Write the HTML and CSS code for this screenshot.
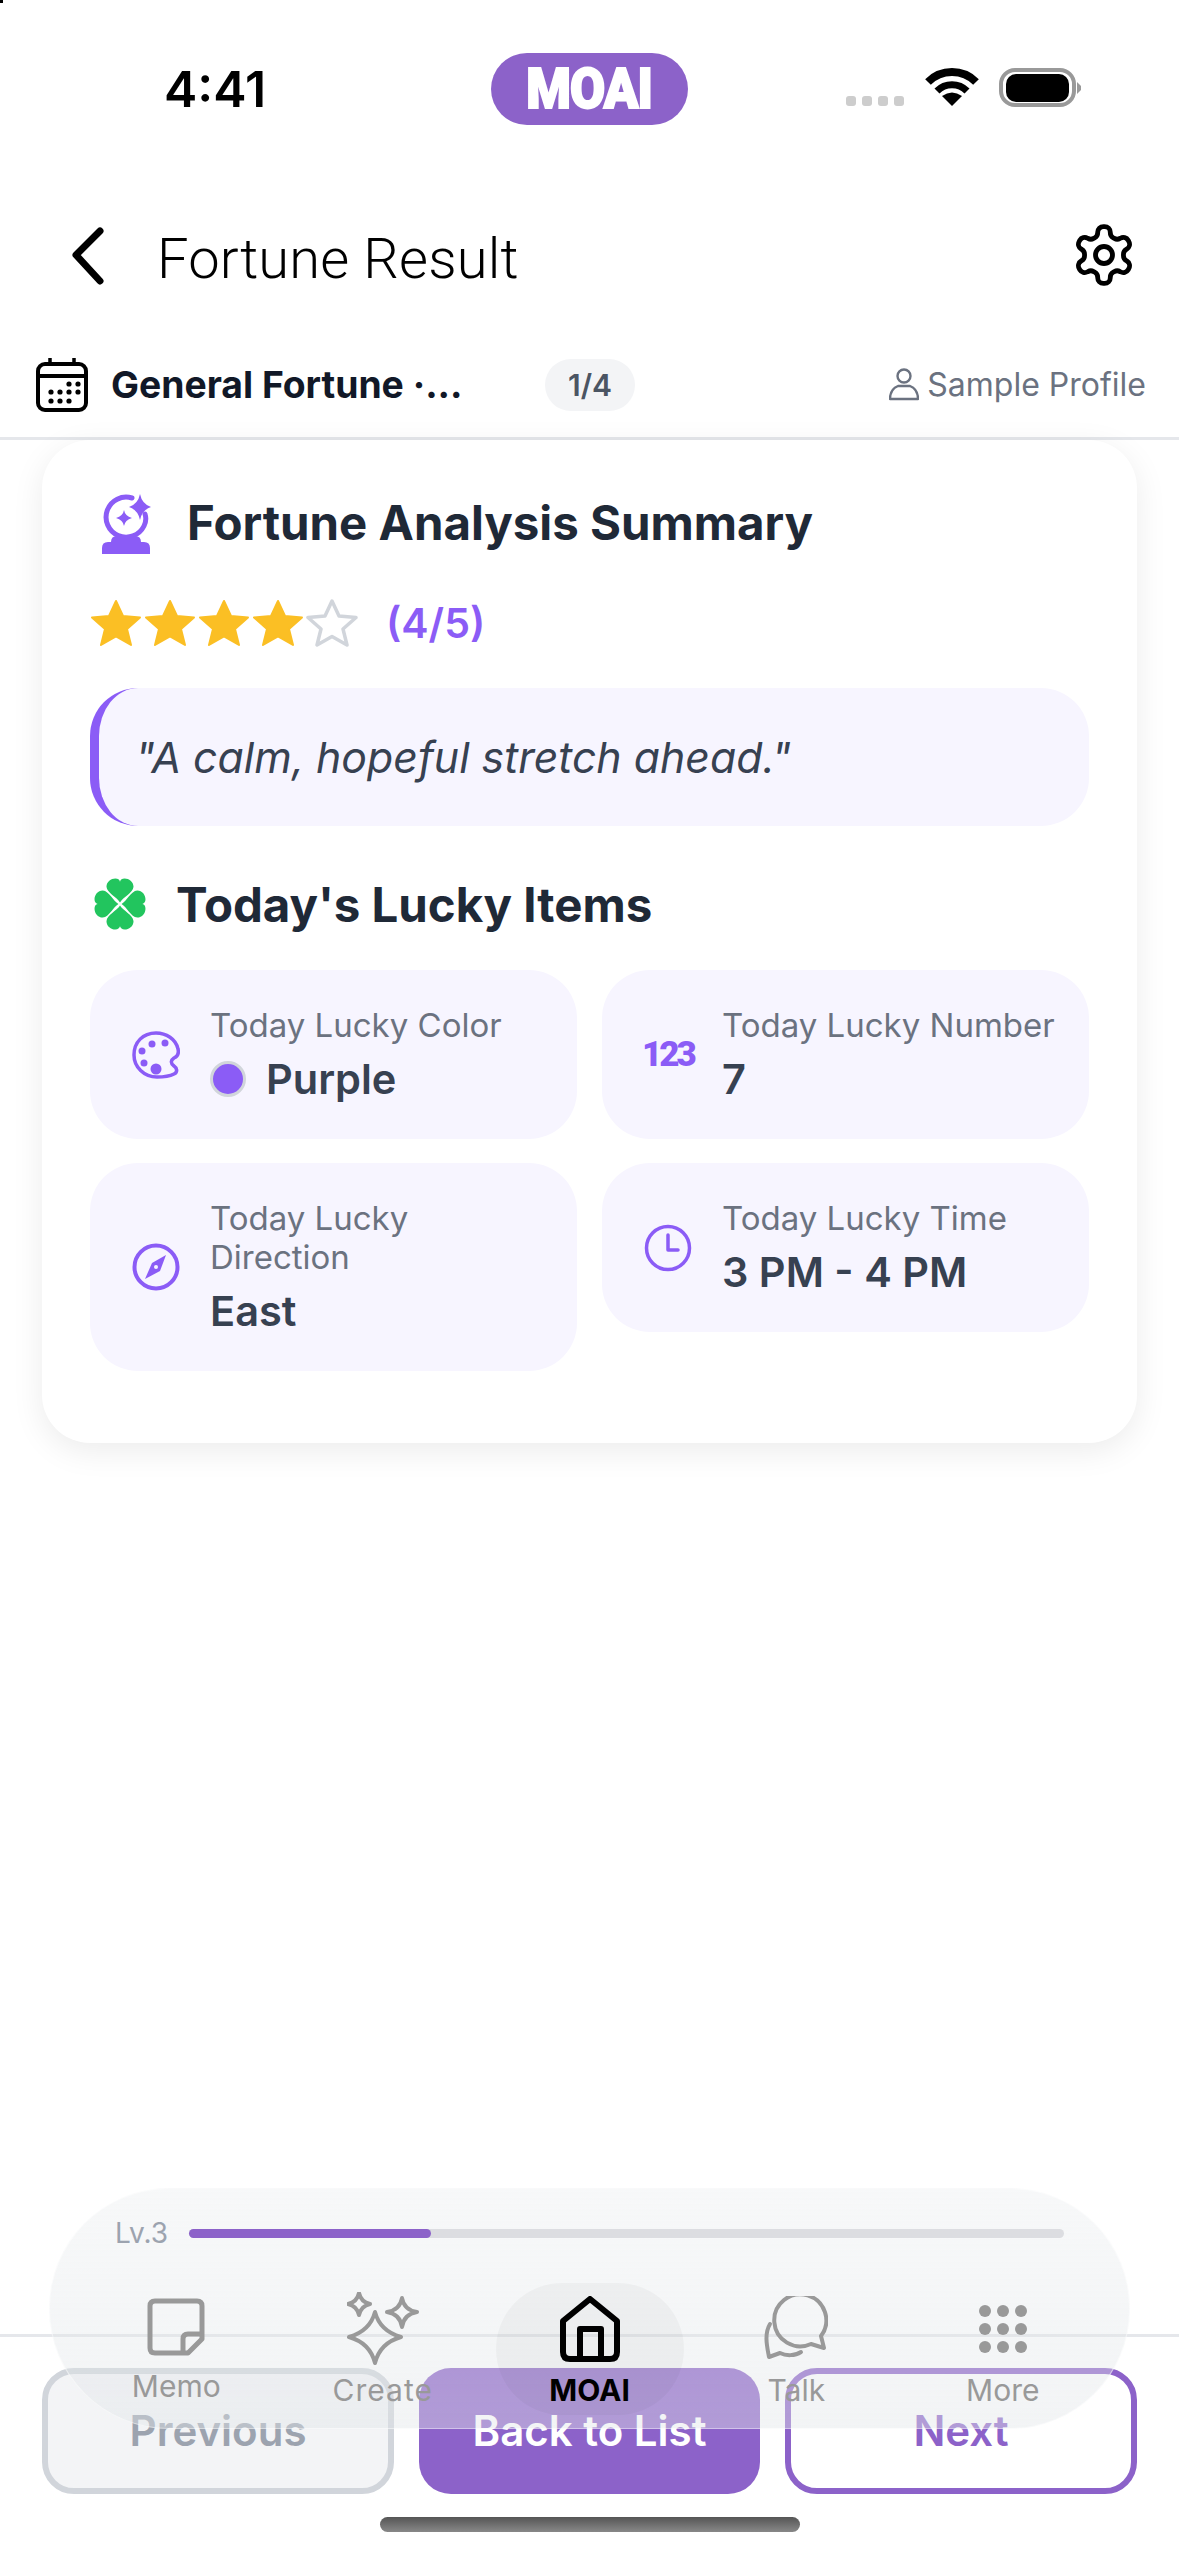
FILE: index.html
```html
<!DOCTYPE html>
<html lang="en">
<head>
    <meta charset="UTF-8">
    <meta name="viewport" content="width=device-width, initial-scale=1.0">
    <title>Fortune Result</title>
    <link rel="stylesheet" href="styles.css">
</head>
<body>
    <div class="screen">
        <span class="corner-mark"></span>

        <div class="status-bar">
            <span class="status-time">4:41</span>
            <span class="status-logo"><span class="status-logo-text">MOAI</span></span>
            <svg class="status-icons" width="236" height="42" viewBox="0 0 236 42">
                <g fill="#cdcdcd">
                    <rect x="0" y="28" width="10" height="10" rx="3"/>
                    <rect x="16" y="28" width="10" height="10" rx="3"/>
                    <rect x="32" y="28" width="10" height="10" rx="3"/>
                    <rect x="48" y="28" width="10" height="10" rx="3"/>
                </g>
                <g fill="none" stroke="#000">
                    <path d="M82 14 A34 34 0 0 1 130 14" stroke-width="8"/>
                    <path d="M91 23 A21 21 0 0 1 121 23" stroke-width="7"/>
                </g>
                <path d="M106 38 L96 28 Q106 21 116 28 Z" fill="#000"/>
                <rect x="155" y="2" width="73" height="35" rx="14" fill="none" stroke="#999" stroke-width="4"/>
                <rect x="160" y="6" width="63" height="28" rx="10" fill="#000"/>
                <path d="M231 14 L235 18 V22 L231 26 Z" fill="#999"/>
            </svg>
        </div>

        <div class="header">
            <svg class="back-icon" width="36" height="60" viewBox="0 0 36 60">
                <polyline points="31,6 7,30 31,56" fill="none" stroke="#000" stroke-width="7" stroke-linecap="round" stroke-linejoin="round"/>
            </svg>
            <h1 class="page-title">Fortune Result</h1>
            <svg class="gear-icon" width="68" height="68" viewBox="0 0 24 24" fill="none" stroke="#000" stroke-width="1.7" stroke-linecap="round" stroke-linejoin="round">
                <path d="M12.22 2h-.44a2 2 0 0 0-2 2v.18a2 2 0 0 1-1 1.73l-.43.25a2 2 0 0 1-2 0l-.15-.08a2 2 0 0 0-2.73.73l-.22.38a2 2 0 0 0 .73 2.73l.15.1a2 2 0 0 1 1 1.72v.51a2 2 0 0 1-1 1.74l-.15.09a2 2 0 0 0-.73 2.73l.22.38a2 2 0 0 0 2.73.73l.15-.08a2 2 0 0 1 2 0l.43.25a2 2 0 0 1 1 1.73V20a2 2 0 0 0 2 2h.44a2 2 0 0 0 2-2v-.18a2 2 0 0 1 1-1.73l.43-.25a2 2 0 0 1 2 0l.15.08a2 2 0 0 0 2.73-.73l.22-.39a2 2 0 0 0-.73-2.73l-.15-.08a2 2 0 0 1-1-1.74v-.5a2 2 0 0 1 1-1.74l.15-.09a2 2 0 0 0 .73-2.73l-.22-.38a2 2 0 0 0-2.73-.73l-.15.08a2 2 0 0 1-2 0l-.43-.25a2 2 0 0 1-1-1.73V4a2 2 0 0 0-2-2z"/>
                <circle cx="12" cy="12" r="3"/>
            </svg>
        </div>

        <div class="tab-row">
            <svg class="calendar-icon" width="52" height="54" viewBox="0 0 52 54">
                <rect x="2" y="6" width="48" height="46" rx="7" fill="none" stroke="#000" stroke-width="4"/>
                <path d="M2 18 H50" stroke="#000" stroke-width="4"/>
                <path d="M14 0 V6 M38 0 V6" stroke="#000" stroke-width="3.5"/>
                <g fill="#000">
                    <circle cx="33" cy="26" r="2.6"/><circle cx="42" cy="26" r="2.6"/>
                    <circle cx="15" cy="34" r="2.6"/><circle cx="24" cy="34" r="2.6"/><circle cx="33" cy="34" r="2.6"/><circle cx="42" cy="34" r="2.6"/>
                    <circle cx="15" cy="43" r="2.6"/><circle cx="24" cy="43" r="2.6"/><circle cx="33" cy="43" r="2.6"/>
                </g>
            </svg>
            <span class="tab-name">General Fortune ·...</span>
            <span class="tab-count">1/4</span>
            <div class="tab-profile">
                <svg width="30" height="33" viewBox="0 0 30 33" fill="none" stroke="#6b7280" stroke-width="2.4">
                    <circle cx="15" cy="8" r="6.5"/>
                    <path d="M9 18 H21 C26 20 29 25 29 31 H1 C1 25 4 20 9 18 Z" stroke-linejoin="round"/>
                </svg>
                <span>Sample Profile</span>
            </div>
        </div>

        <div class="content">
            <div class="card">
                <div class="card-title-row">
                    <svg class="ball-icon" width="49" height="60" viewBox="0 0 49 60">
                        <path d="M30 4 A20 20 0 1 0 42 32 Q45 26 43 20" fill="none" stroke="#8b5cf6" stroke-width="5" stroke-linecap="round"/>
                        <path d="M38 0 Q40 10 49 13 Q40 16 38 26 Q36 16 27 13 Q36 10 38 0 Z" fill="#8b5cf6"/>
                        <path d="M22 16 Q23 22 30 24 Q23 26 22 32 Q21 26 14 24 Q21 22 22 16 Z" fill="#8b5cf6"/>
                        <path d="M9 48 Q9 42 15 42 H33 Q39 42 39 48 H42 Q48 48 48 54 V60 H0 V54 Q0 48 6 48 Z" fill="#8b5cf6"/>
                    </svg>
                    <h2 class="card-title card-title-main">Fortune Analysis Summary</h2>
                </div>

                <div class="rating-row">
                    <svg class="stars" width="272" height="48" viewBox="0 0 272 48">
                        <defs>
                            <path id="star" d="M26 2 L33 17 L50 18.5 L37 30 L41 46 L26 37.5 L11 46 L15 30 L2 18.5 L19 17 Z"/>
                        </defs>
                        <g fill="#fbbf24" stroke="#fbbf24" stroke-width="2" stroke-linejoin="round">
                            <use href="#star"/>
                            <use href="#star" x="54"/>
                            <use href="#star" x="108"/>
                            <use href="#star" x="162"/>
                        </g>
                        <use href="#star" x="216" fill="none" stroke="#d1d5db" stroke-width="3.5" stroke-linejoin="round"/>
                    </svg>
                    <span class="rating-text">(4/5)</span>
                </div>

                <div class="quote">"A calm, hopeful stretch ahead."</div>

                <div class="lucky-title-row">
                    <svg width="52" height="52" viewBox="0 0 100 100" fill="#22c55e">
                        <path id="leaf" d="M50 47 C44 37 25 29 24 17 C24 7 33 1 41 1 C46 1 49 3 50 7 C51 3 54 1 59 1 C67 1 76 7 76 17 C75 29 56 37 50 47 Z"/>
                        <use href="#leaf" transform="rotate(90 50 50)"/>
                        <use href="#leaf" transform="rotate(180 50 50)"/>
                        <use href="#leaf" transform="rotate(270 50 50)"/>
                    </svg>
                    <h2 class="card-title">Today's Lucky Items</h2>
                </div>

                <div class="lucky-grid">
                    <div class="lucky-item">
                        <svg class="lucky-icon" width="48" height="50" viewBox="0 0 48 50">
                            <path d="M24 3 C11 3 2 12 2 25 C2 37 12 47 25 47 C33 47 38 46 42 44 C46 42 45 38 42 36 C38 33 39 30 42 28 C46 26 47 23 46 19 C44 9 34 3 24 3 Z" fill="none" stroke="#8b5cf6" stroke-width="3.5"/>
                            <g fill="#8b5cf6">
                                <circle cx="20" cy="14" r="3.5"/><circle cx="33" cy="13" r="3.5"/>
                                <circle cx="10" cy="21" r="3.5"/><circle cx="12" cy="33" r="3.5"/>
                                <circle cx="24" cy="39" r="5.5"/>
                            </g>
                        </svg>
                        <div class="lucky-text">
                            <div class="lucky-label">Today Lucky Color</div>
                            <div class="lucky-value lucky-value-color"><span class="color-dot"></span>Purple</div>
                        </div>
                    </div>
                    <div class="lucky-item">
                        <span class="lucky-icon number-icon">123</span>
                        <div class="lucky-text">
                            <div class="lucky-label">Today Lucky Number</div>
                            <div class="lucky-value">7</div>
                        </div>
                    </div>
                    <div class="lucky-item">
                        <svg class="lucky-icon" width="48" height="50" viewBox="0 0 48 50">
                            <circle cx="24" cy="25" r="21.5" fill="none" stroke="#8b5cf6" stroke-width="4"/>
                            <path d="M34 13 L28 29 L13 37 L20 21 Z" fill="#8b5cf6"/>
                            <circle cx="24" cy="25" r="2" fill="#f7f5ff"/>
                        </svg>
                        <div class="lucky-text">
                            <div class="lucky-label">Today Lucky Direction</div>
                            <div class="lucky-value">East</div>
                        </div>
                    </div>
                    <div class="lucky-item">
                        <svg class="lucky-icon" width="48" height="50" viewBox="0 0 48 50">
                            <circle cx="24" cy="25" r="21.5" fill="none" stroke="#8b5cf6" stroke-width="3.5"/>
                            <path d="M24 12 V27 H34" fill="none" stroke="#8b5cf6" stroke-width="3.5" stroke-linecap="round" stroke-linejoin="round"/>
                        </svg>
                        <div class="lucky-text">
                            <div class="lucky-label">Today Lucky Time</div>
                            <div class="lucky-value">3 PM - 4 PM</div>
                        </div>
                    </div>
                </div>
            </div>
        </div>

        <div class="footer">
            <div class="footer-buttons">
                <button class="btn btn-prev">Previous</button>
                <button class="btn btn-list">Back to List</button>
                <button class="btn btn-next">Next</button>
            </div>
            <div class="home-indicator"></div>
        </div>

        <div class="nav-pill">
            <div class="level-row">
                <span class="level-label">Lv.3</span>
                <div class="level-track"><div class="level-fill" style="width: 242px"></div></div>
            </div>
            <div class="nav-items">
                <div class="nav-item nav-item-memo">
                    <div class="nav-icon">
                        <svg width="58" height="58" viewBox="0 0 58 58" fill="none" stroke="#999" stroke-width="5" stroke-linejoin="round">
                            <path d="M8 3 H50 Q55 3 55 8 V41 L41 55 H8 Q3 55 3 50 V8 Q3 3 8 3 Z"/>
                            <path d="M36 55 V41 Q36 36 41 36 H55"/>
                        </svg>
                    </div>
                    <span class="nav-label">Memo</span>
                </div>
                <div class="nav-item nav-item-create">
                    <div class="nav-icon">
                        <svg width="72" height="74" viewBox="0 0 72 74" fill="none" stroke="#999" stroke-width="4" stroke-linejoin="round">
                            <path d="M28 20 Q33 39 54 45 Q33 51 28 71 Q23 51 2 45 Q23 39 28 20 Z"/>
                            <path d="M12 1 Q14 10 23 12 Q14 14 12 23 Q10 14 1 12 Q10 10 12 1 Z"/>
                            <path d="M55 6 Q57 18 70 20 Q57 22 55 35 Q53 22 40 20 Q53 18 55 6 Z"/>
                        </svg>
                    </div>
                    <span class="nav-label">Create</span>
                </div>
                <div class="nav-item nav-item-active">
                    <div class="nav-icon">
                        <svg width="60" height="66" viewBox="0 0 60 66" fill="none" stroke="#000" stroke-width="6" stroke-linejoin="round">
                            <path d="M3 25 L30 3 L57 25 V56 Q57 63 50 63 H10 Q3 63 3 56 Z"/>
                            <path d="M20 63 V33 H41 V63"/>
                        </svg>
                    </div>
                    <span class="nav-label">MOAI</span>
                </div>
                <div class="nav-item">
                    <div class="nav-icon">
                        <svg width="64" height="66" viewBox="0 0 64 66" fill="none" stroke="#999" stroke-width="4" stroke-linecap="round" stroke-linejoin="round">
                            <path d="M47 48 L60 52 L57 40 A26 26 0 1 0 47 48 Z"/>
                            <path d="M6 28 C0 38 3 50 5 61 L16 57 C22 60 31 60 37 56"/>
                        </svg>
                    </div>
                    <span class="nav-label">Talk</span>
                </div>
                <div class="nav-item">
                    <div class="nav-icon">
                        <svg width="48" height="48" viewBox="0 0 48 48" fill="#999">
                            <circle cx="6" cy="6" r="6"/><circle cx="24" cy="6" r="6"/><circle cx="42" cy="6" r="6"/>
                            <circle cx="6" cy="24" r="6"/><circle cx="24" cy="24" r="6"/><circle cx="42" cy="24" r="6"/>
                            <circle cx="6" cy="42" r="6"/><circle cx="24" cy="42" r="6"/><circle cx="42" cy="42" r="6"/>
                        </svg>
                    </div>
                    <span class="nav-label">More</span>
                </div>
            </div>
        </div>
    </div>
</body>
</html>
```

FILE: styles.css
```css
* {
    box-sizing: border-box;
}

body {
    margin: 0;
    background-color: #fff;
    font-family: Inter, "Noto Sans", sans-serif;
}

.screen {
    position: relative;
    width: 1179px;
    height: 2556px;
    overflow: hidden;
    background-color: #fff;
}

.corner-mark {
    position: absolute;
    top: 0;
    left: 0;
    width: 3px;
    height: 3px;
    background-color: #000;
}

/* status bar */
.status-bar {
    height: 178px;
    padding-left: 164px;
    display: flex;
    align-items: center;
}

.status-time {
    width: 327px;
    font-size: 50px;
    font-weight: 600;
    color: #000;
}

.status-logo {
    width: 197px;
    height: 72px;
    border-radius: 36px;
    background-color: #8c62c9;
    display: flex;
    justify-content: center;
    align-items: center;
}

.status-logo-text {
    font-family: Roboto, sans-serif;
    font-size: 56px;
    font-weight: 900;
    line-height: 1;
    letter-spacing: -1px;
    color: #fff;
    -webkit-text-stroke: 2px #fff;
    transform: scaleX(0.91);
}

.status-icons {
    margin-left: 158px;
}

/* header */
.header {
    height: 154px;
    padding: 0 41px 0 69px;
    display: flex;
    align-items: center;
}

.page-title {
    margin: 8px 0 0 52px;
    font-family: Roboto, sans-serif;
    font-size: 56px;
    font-weight: 300;
    letter-spacing: 0.2px;
    color: #000;
}

.gear-icon {
    margin-left: auto;
}

/* tab row */
.tab-row {
    height: 108px;
    padding: 0 33px 0 36px;
    border-bottom: 3px solid #e5e7eb;
    display: flex;
    align-items: center;
}

.tab-name {
    width: 434px;
    margin-left: 23px;
    font-size: 37.3px;
    font-weight: 700;
    color: #111827;
    white-space: nowrap;
}

.tab-count {
    width: 90px;
    height: 52px;
    border-radius: 26px;
    background-color: #f3f4f6;
    font-size: 30px;
    font-weight: 600;
    color: #4b5563;
    display: flex;
    justify-content: center;
    align-items: center;
}

.tab-profile {
    margin-left: auto;
    font-size: 32px;
    color: #6b7280;
    display: flex;
    align-items: center;
    gap: 8px;
}

/* card */
.content {
    padding: 0 42px;
}

.card {
    padding: 54px 48px 72px;
    border-radius: 48px;
    background-color: #fff;
    box-shadow: 0 8px 32px rgba(0, 0, 0, 0.08);
}

.card-title-row {
    height: 60px;
    padding-left: 12px;
    display: flex;
    align-items: center;
    gap: 36px;
}

.card-title {
    margin: 0;
    font-size: 47.4px;
    font-weight: 700;
    color: #1f2937;
}

.card-title-main {
    margin-bottom: 3px;
}

.rating-row {
    height: 48px;
    margin-top: 45px;
    display: flex;
    align-items: center;
    gap: 24px;
}

.stars {
    display: block;
}

.rating-text {
    font-size: 41px;
    line-height: 48px;
    font-weight: 600;
    color: #8b5cf6;
}

.quote {
    height: 138px;
    margin-top: 41px;
    padding-left: 36px;
    border-left: 9px solid #8b5cf6;
    border-radius: 48px;
    background-color: #f7f5ff;
    font-size: 42.8px;
    font-style: italic;
    color: #374151;
    display: flex;
    align-items: center;
}

.lucky-title-row {
    height: 52px;
    margin-top: 52px;
    padding-left: 4px;
    display: flex;
    align-items: center;
    gap: 30px;
}

.lucky-grid {
    margin-top: 40px;
    display: grid;
    grid-template-columns: 1fr 1fr;
    gap: 24px 25px;
    align-items: start;
}

.lucky-item {
    padding: 36px 27px 36px 42px;
    border-radius: 48px;
    background-color: #f7f5ff;
    display: flex;
    align-items: center;
    gap: 30px;
}

.lucky-icon {
    flex: none;
}

.number-icon {
    width: 48px;
    margin-left: -2px;
    margin-right: 2px;
    font-family: Roboto, sans-serif;
    font-size: 35px;
    font-weight: 900;
    letter-spacing: -3px;
    color: #8b5cf6;
}

.lucky-label {
    font-size: 33px;
    line-height: 39px;
    color: #6b7280;
}

.lucky-value {
    margin-top: 10px;
    font-size: 41.5px;
    line-height: 48px;
    font-weight: 600;
    color: #374151;
}

.lucky-value-color {
    display: flex;
    align-items: center;
    gap: 20px;
}

.color-dot {
    width: 36px;
    height: 36px;
    border: 3px solid #d1d5db;
    border-radius: 50%;
    background-color: #8b5cf6;
}

/* footer buttons */
.footer {
    position: absolute;
    left: 0;
    right: 0;
    top: 2334px;
    height: 222px;
    padding: 31px 42px 0;
    border-top: 3px solid #e5e7eb;
    background-color: #fff;
}

.footer-buttons {
    display: grid;
    grid-template-columns: 352px 341px 1fr;
    gap: 25px;
}

.btn {
    height: 126px;
    padding-bottom: 3px;
    border-radius: 32px;
    font-family: Inter, sans-serif;
    font-size: 42px;
    font-weight: 600;
}

.btn-prev {
    border: 6px solid #d1d5db;
    background-color: #f3f4f6;
    color: #9ca3af;
}

.btn-list {
    border: none;
    background-color: #8c62c9;
    color: #fff;
}

.btn-next {
    border: 6px solid #8c62c9;
    background-color: #fff;
    color: #8c62c9;
}

.home-indicator {
    width: 420px;
    height: 15px;
    margin: 23px auto 0;
    border-radius: 8px;
    background: linear-gradient(#555, #888);
}

/* floating nav */
.nav-pill {
    position: absolute;
    left: 49px;
    top: 2188px;
    width: 1081px;
    height: 241px;
    padding: 29px 23px 0;
    border: 1px solid rgba(255, 255, 255, 0.5);
    border-radius: 120px;
    background: linear-gradient(rgba(226, 230, 233, 0.28), rgba(226, 230, 233, 0.44));
}

.level-row {
    height: 30px;
    padding: 0 42px;
    display: flex;
    align-items: center;
    gap: 21px;
}

.level-label {
    font-size: 28px;
    color: #9ca3af;
}

.level-track {
    flex: 1;
    height: 9px;
    border-radius: 5px;
    background-color: #dcdde1;
}

.level-fill {
    height: 9px;
    border-radius: 5px;
    background-color: #8c62c9;
}

.nav-items {
    margin-top: 35px;
    display: flex;
}

.nav-item {
    flex: 1;
    height: 132px;
    padding-top: 10px;
    display: flex;
    flex-direction: column;
    align-items: center;
    gap: 7px;
}

.nav-item-active {
    flex: 0 0 188px;
    margin: 0 9.5px;
    border-radius: 66px;
    background-color: rgba(0, 0, 0, 0.03);
}

.nav-icon {
    height: 72px;
    display: flex;
    justify-content: center;
    align-items: center;
}

.nav-item-memo .nav-icon {
    height: 68px;
}

.nav-label {
    font-size: 30px;
    line-height: 36px;
    color: #999;
}

.nav-item-create .nav-label {
    letter-spacing: 1px;
}

.nav-item-active .nav-label {
    font-weight: 700;
    color: #000;
}
```
